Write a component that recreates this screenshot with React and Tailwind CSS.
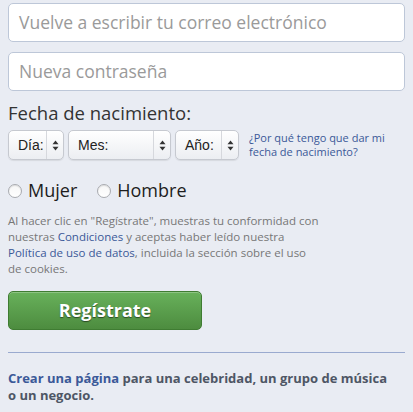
export default function App() {
  const font = { fontFamily: '"Open Sans", "Liberation Sans", sans-serif' };

  const Select = ({ label, width }) => (
    <div
      className="flex h-[30px] items-stretch rounded-[5px] border border-[#c6c9d0] bg-gradient-to-b from-white to-[#eceef2] shadow-[0_1px_1px_rgba(0,0,0,0.08)]"
      style={{ width }}
    >
      <div className="flex flex-1 items-center pl-[9px] text-[14px] text-[#222]" style={{ fontFamily: '"Liberation Sans", sans-serif' }}>
        {label}
      </div>
      <div className="flex w-[17px] items-center justify-center border-l border-[#d6d8dd]">
        <svg width="7" height="11" viewBox="0 0 7 11">
          <path d="M3.5 0.5 L6.5 4.2 H0.5 Z" fill="#333" />
          <path d="M3.5 10.5 L6.5 6.8 H0.5 Z" fill="#333" />
        </svg>
      </div>
    </div>
  );

  const Radio = ({ label }) => (
    <label className="flex items-center gap-[6px]">
      <span className="h-[14px] w-[14px] rounded-full border border-[#a9abb0] bg-gradient-to-b from-[#f6f6f6] to-white shadow-[inset_0_1px_1px_rgba(0,0,0,0.1)]" />
      <span className="text-[18px] text-[#1d1d1d]">{label}</span>
    </label>
  );

  return (
    <div className="min-h-[412px] w-[413px] bg-[#e9ecf3] px-[8px] pt-[3px]" style={font}>
      <div className="flex h-[39px] items-center rounded-[5px] border border-[#bdc7d8] bg-white px-[10px] text-[17.5px] text-[#9a9a9a]">
        Vuelve a escribir tu correo electrónico
      </div>
      <div className="mt-[10px] flex h-[39px] items-center rounded-[5px] border border-[#bdc7d8] bg-white px-[10px] text-[17.5px] text-[#9a9a9a]">
        Nueva contraseña
      </div>

      <div className="mt-[10px] text-[18.5px] leading-[24px] text-[#333]">Fecha de nacimiento:</div>

      <div className="mt-[5px] flex items-center">
        <Select label="Día:" width={56} />
        <div className="ml-[4px]"><Select label="Mes:" width={103} /></div>
        <div className="ml-[4px]"><Select label="Año:" width={64} /></div>
        <a className="ml-[10px] text-[11px] leading-[14px] text-[#3b5998]">
          ¿Por qué tengo que dar mi<br />fecha de nacimiento?
        </a>
      </div>

      <div className="mt-[17px] flex items-center gap-[20px]">
        <Radio label="Mujer" />
        <Radio label="Hombre" />
      </div>

      <p className="mt-[9px] text-[11.5px] leading-[16px] text-[#777]">
        Al hacer clic en "Regístrate", muestras tu conformidad con<br />
        nuestras <span className="text-[#3b5998]">Condiciones</span> y aceptas haber leído nuestra<br />
        <span className="text-[#3b5998]">Política de uso de datos</span>, incluida la sección sobre el uso<br />
        de cookies.
      </p>

      <button
        type="button"
        className="mt-[14px] flex h-[39px] w-[194px] items-center justify-center rounded-[5px] border border-[#3f7c32] bg-gradient-to-b from-[#68b15b] to-[#4d8c3f] text-[18px] font-bold text-white shadow-[inset_0_1px_0_rgba(255,255,255,0.25)] [text-shadow:0_1px_1px_rgba(0,0,0,0.5)]"
      >
        Regístrate
      </button>

      <div className="mt-[22px] h-px bg-[#9aaacf]" />

      <p className="mt-[17px] text-[13px] font-bold leading-[17px] text-[#4e5665]">
        <span className="text-[#3b5998]">Crear una página</span> para una celebridad, un grupo de música<br />o un negocio.
      </p>
    </div>
  );
}
